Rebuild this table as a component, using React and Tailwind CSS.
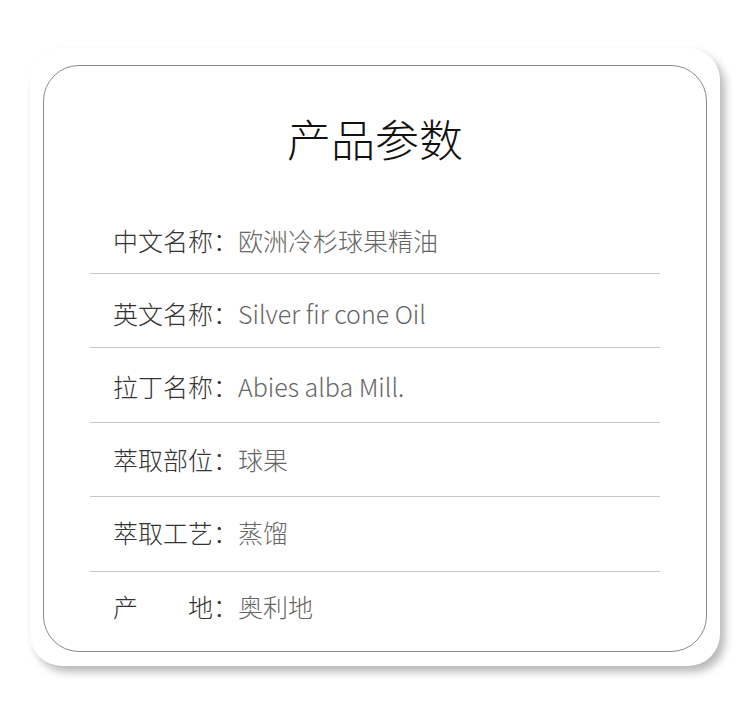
export default function App() {
  const rows = [
    ["中文名称：", "欧洲冷杉球果精油", "pt-[29px]"],
    ["英文名称：", "Silver fir cone Oil", "pt-[27.5px]"],
    ["拉丁名称：", "Abies alba Mill.", "pt-[26px]"],
    ["萃取部位：", "球果", "pt-[24.5px]"],
    ["萃取工艺：", "蒸馏", "pt-[23px]"],
    ["产地", "奥利地", "pt-[22.5px]"],
  ];
  return (
    <div
      className="w-[750px] h-[721px] bg-white pt-[48px] pl-[30px]"
      style={{ fontFamily: '"Noto Sans CJK SC", "Noto Sans", sans-serif' }}
    >
      <div className="w-[690px] h-[618px] bg-white rounded-[32px] shadow-[5px_6px_8px_rgba(0,0,0,0.28)] pt-[17px] pl-[13px]">
        <div className="w-[664px] h-[587px] border border-[#8a8a8a] rounded-[36px] flex flex-col">
          <div className="mt-[50px] h-[44px] text-[44px] leading-[44px] text-[#111] font-light text-center">
            产品参数
          </div>
          <div className="mt-[39px] ml-[46px] w-[570px] flex flex-col">
            {rows.map(([k, v, pt], i) => (
              <div
                key={i}
                className={
                  "h-[74.5px] pl-[23px] flex items-start text-[25px] leading-none " +
                  pt +
                  " " +
                  (i < rows.length - 1 ? "border-b border-[#c8c8c8]" : "")
                }
              >
                {k === "产地" ? (
                  <span className="w-[125px] flex text-[#333] font-light">
                    <span className="w-[75px]">产</span>
                    <span>地：</span>
                  </span>
                ) : (
                  <span className="w-[125px] text-[#333] font-light">{k}</span>
                )}
                <span className="text-[#666] font-light">{v}</span>
              </div>
            ))}
          </div>
        </div>
      </div>
    </div>
  );
}
